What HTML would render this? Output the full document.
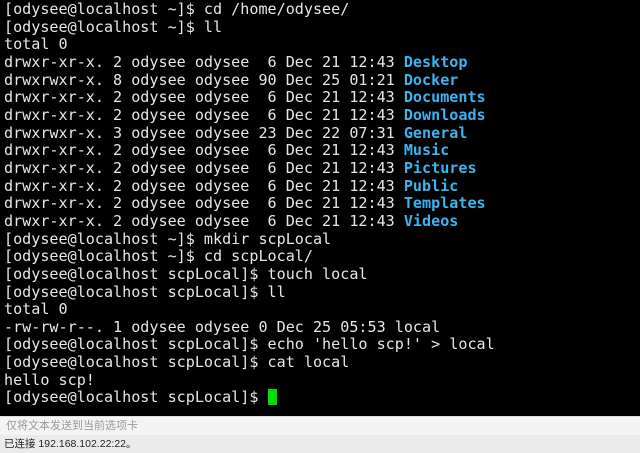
<!DOCTYPE html>
<html><head><meta charset="utf-8"><style>
html,body{margin:0;padding:0;width:640px;height:453px;overflow:hidden;background:#000}
#t{position:absolute;left:0;top:0;width:640px;height:416px;background:#000;}
pre{margin:0;position:absolute;left:4px;top:1px;font-family:"DejaVu Sans Mono",monospace;font-size:15.1px;line-height:17.65px;color:#e6e6e6;}
b{color:#3cb4f0;font-weight:bold}
.cur{display:inline-block;width:9px;height:16px;background:#00e000;vertical-align:-3px}
#in{position:absolute;left:0;top:416px;width:640px;height:19px;background:#f4f4f4;border-top:1px solid #ddd;font-family:"Liberation Sans","Noto Sans CJK SC",sans-serif;font-size:11px;color:#999;line-height:19px;padding-left:6px;box-sizing:border-box}
#st{position:absolute;left:0;top:435px;width:640px;height:18px;background:#ebebeb;font-family:"Liberation Sans","Noto Sans CJK SC",sans-serif;font-size:10.5px;color:#222;line-height:18px;padding-left:4px;box-sizing:border-box}
</style></head><body>
<div id="t"><pre>[odysee@localhost ~]$ cd /home/odysee/
[odysee@localhost ~]$ ll
total 0
drwxr-xr-x. 2 odysee odysee  6 Dec 21 12:43 <b>Desktop</b>
drwxrwxr-x. 8 odysee odysee 90 Dec 25 01:21 <b>Docker</b>
drwxr-xr-x. 2 odysee odysee  6 Dec 21 12:43 <b>Documents</b>
drwxr-xr-x. 2 odysee odysee  6 Dec 21 12:43 <b>Downloads</b>
drwxrwxr-x. 3 odysee odysee 23 Dec 22 07:31 <b>General</b>
drwxr-xr-x. 2 odysee odysee  6 Dec 21 12:43 <b>Music</b>
drwxr-xr-x. 2 odysee odysee  6 Dec 21 12:43 <b>Pictures</b>
drwxr-xr-x. 2 odysee odysee  6 Dec 21 12:43 <b>Public</b>
drwxr-xr-x. 2 odysee odysee  6 Dec 21 12:43 <b>Templates</b>
drwxr-xr-x. 2 odysee odysee  6 Dec 21 12:43 <b>Videos</b>
[odysee@localhost ~]$ mkdir scpLocal
[odysee@localhost ~]$ cd scpLocal/
[odysee@localhost scpLocal]$ touch local
[odysee@localhost scpLocal]$ ll
total 0
-rw-rw-r--. 1 odysee odysee 0 Dec 25 05:53 local
[odysee@localhost scpLocal]$ echo 'hello scp!' &gt; local
[odysee@localhost scpLocal]$ cat local
hello scp!
[odysee@localhost scpLocal]$ <span class="cur"></span></pre></div>
<div id="in">仅将文本发送到当前选项卡</div>
<div id="st">已连接 192.168.102.22:22。</div>
</body></html>
